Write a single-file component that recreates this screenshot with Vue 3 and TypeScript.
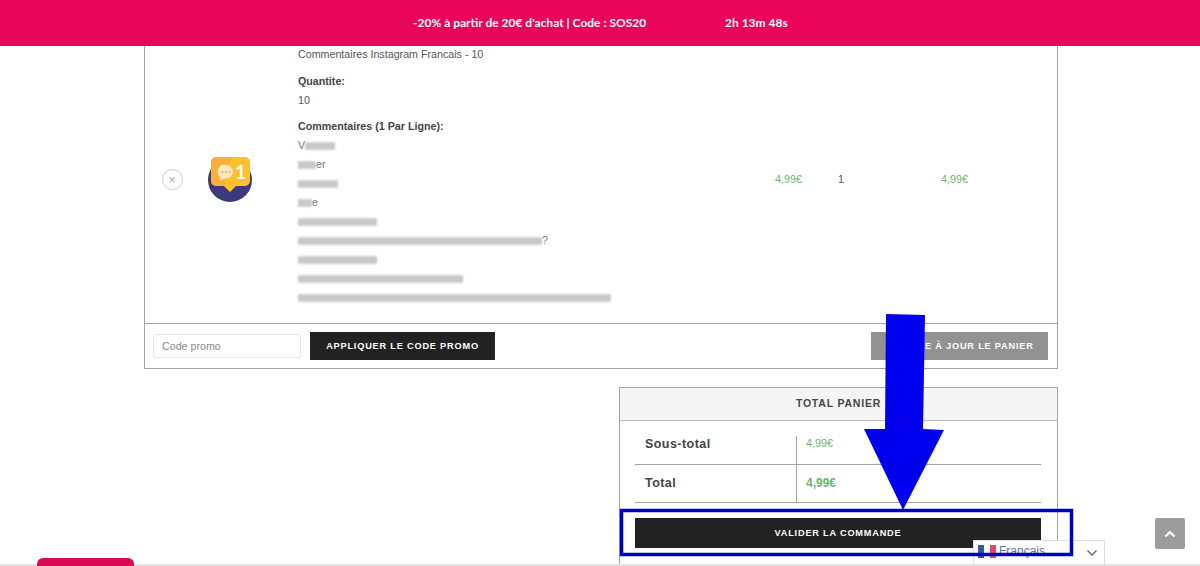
<script setup lang="ts">
interface NameLine { before: string; width: number; after: string }
const names: NameLine[] = [
  { before: 'V', width: 30, after: '' },
  { before: '', width: 18, after: 'er' },
  { before: '', width: 40, after: '' },
  { before: '', width: 14, after: 'e' },
  { before: '', width: 79, after: '' },
  { before: '', width: 244, after: '?' },
  { before: '', width: 79, after: '' },
  { before: '', width: 165, after: '' },
  { before: '', width: 313, after: '' },
]
</script>

<template>
  <div class="page">
    <header class="promo">
      <span class="promo-text">-20% à partir de 20€ d'achat | Code : SOS20</span>
      <span class="promo-timer">2h 13m 48s</span>
    </header>

    <main class="content">
      <section class="cart">
        <div class="cart-row">
          <div class="remove-cell">
            <span class="remove">×</span>
          </div>
          <div class="thumb-cell">
            <svg width="46" height="48" viewBox="0 0 46 48" aria-hidden="true">
              <circle cx="23" cy="25" r="22" fill="#3b3a7c" />
              <path d="M9 2h29a5 5 0 0 1 5 5v19a5 5 0 0 1-5 5h-9l-6 6-6-6H9a5 5 0 0 1-5-5V7a5 5 0 0 1 5-5z" fill="#fdc02f" />
              <path d="M9 2h17C20 10 17 21 18 32l-1-1H9a5 5 0 0 1-5-5V7a5 5 0 0 1 5-5z" fill="#fbb03b" />
              <path d="M19 10a7 6.800 0 0 1 0 13.600h-2l-4 3 .6-4.400A6.800 6.800 0 0 1 19 10z" fill="#ffe9c4" />
              <circle cx="15.500" cy="17" r="1" fill="#f5a623" />
              <circle cx="19" cy="17" r="1" fill="#f5a623" />
              <circle cx="22.500" cy="17" r="1" fill="#f5a623" />
              <text x="33.500" y="24" class="thumb-num">1</text>
            </svg>
          </div>
          <div class="details">
            <p class="line product">Commentaires Instagram Francais - 10</p>
            <p class="line label">Quantite:</p>
            <p class="line">10</p>
            <p class="line label label-second">Commentaires (1 Par Ligne):</p>
            <p v-for="(n, i) in names" :key="i" class="line name">
              <span v-if="n.before">{{ n.before }}</span><span class="smear" :style="{ width: n.width + 'px' }"></span><span v-if="n.after">{{ n.after }}</span>
            </p>
          </div>
          <div class="price">4,99€</div>
          <div class="qty">1</div>
          <div class="price">4,99€</div>
        </div>
        <div class="coupon-row">
          <div class="coupon">
            <input class="coupon-input" type="text" placeholder="Code promo" />
            <button class="btn btn-dark" type="button">APPLIQUER LE CODE PROMO</button>
          </div>
          <button class="btn btn-grey" type="button">METTRE À JOUR LE PANIER</button>
        </div>
      </section>

      <section class="totals">
        <h2 class="totals-title">TOTAL PANIER</h2>
        <div class="totals-body">
          <div class="totals-row first">
            <div class="totals-label">Sous-total</div>
            <div class="totals-value">4,99€</div>
          </div>
          <div class="totals-row">
            <div class="totals-label">Total</div>
            <div class="totals-value strong">4,99€</div>
          </div>
          <button class="btn checkout" type="button">VALIDER LA COMMANDE</button>
        </div>
      </section>
    </main>

    <div class="lang">
      <span class="flag"><i class="fb"></i><i class="fw"></i><i class="fr"></i></span>
      <span class="lang-name">Français</span>
      <svg class="lang-chev" width="12" height="8" viewBox="0 0 12 8" aria-hidden="true">
        <path d="M1.500 1.500 6 6l4.500-4.500" fill="none" stroke="#666" stroke-width="1.300" />
      </svg>
    </div>

    <svg class="annotation" width="1200" height="566" viewBox="0 0 1200 566" aria-hidden="true">
      <polygon points="886,314 925,315 923,429 944,430 903,510 864,429 885,429" fill="#0000ee" />
      <rect x="621.500" y="510.500" width="450" height="44" fill="none" stroke="#0000c4" stroke-width="3.500" />
    </svg>

    <a class="top-btn" aria-label="Haut de page">
      <svg width="12" height="8" viewBox="0 0 12 8" aria-hidden="true">
        <path d="M1.500 6.500 6 2l4.500 4.500" fill="none" stroke="#fff" stroke-width="2.200" />
      </svg>
    </a>

    <div class="pink-tab"></div>
    <div class="bottom-line"></div>
  </div>
</template>

<style>
html, body {
  margin: 0;
  height: 100%;
  overflow: hidden;
  background: #fff;
}
</style>

<style scoped>
.page {
  position: relative;
  height: 566px;
  overflow: hidden;
  font-family: "Liberation Sans", Arial, sans-serif;
  color: #444;
  background: #fff;
}
.promo {
  position: absolute;
  top: 0;
  left: 0;
  right: 0;
  height: 46px;
  z-index: 3;
  display: flex;
  align-items: center;
  padding: 0 0 1px 413px;
  box-sizing: border-box;
  background: #e8055a;
  color: #fff;
  font-family: Lato, sans-serif;
  font-size: 12px;
  font-weight: 700;
}
.promo-text {
  width: 312px;
}
.content {
  padding: 35px 142px 0 144px;
  display: flex;
  flex-direction: column;
}
.cart {
  border: 1px solid #a3a3a3;
  border-top: none;
}
.cart-row {
  display: grid;
  grid-template-columns: 54px 62px 514px 63px 103px 1fr;
  height: 288px;
  align-items: center;
  font-size: 10.800px;
}
.remove-cell {
  display: flex;
  justify-content: center;
}
.remove {
  width: 19px;
  height: 19px;
  border: 1px solid #ccc;
  border-radius: 50%;
  display: flex;
  align-items: center;
  justify-content: center;
  font-size: 13px;
  line-height: 1;
  color: #aaa;
}
.thumb-cell {
  display: flex;
  justify-content: center;
}
.thumb-num {
  font: 700 19px Lato, sans-serif;
  fill: #fff;
  text-anchor: middle;
}
.details {
  align-self: start;
  padding: 10px 0 0 37px;
  font-size: 10.700px;
  color: #555;
}
.line {
  margin: 0;
  height: 19px;
  line-height: 19px;
  white-space: nowrap;
}
.product {
  margin-bottom: 8px;
}
.label {
  font-weight: 700;
  color: #444;
}
.label-second {
  margin-top: 7px;
}
.name {
  display: flex;
  align-items: center;
  color: #777;
}
.smear {
  display: inline-block;
  height: 8px;
  background: repeating-linear-gradient(180deg, #d2d2d2 0 2px, #b4b4b4 2px 3px);
  filter: blur(1.200px);
}
.price {
  color: #6cb56c;
  font-size: 10.800px;
}
.qty {
  color: #555;
  font-size: 10.800px;
}
.coupon-row {
  border-top: 1px solid #a3a3a3;
  height: 44px;
  padding: 0 9px 0 8px;
  display: flex;
  align-items: center;
  justify-content: space-between;
}
.coupon {
  display: flex;
  align-items: center;
  gap: 9px;
}
.coupon-input {
  width: 148px;
  height: 24px;
  box-sizing: border-box;
  border: 1px solid #e8e8e8;
  border-radius: 2px;
  padding: 0 8px;
  font: 10.700px "Liberation Sans", Arial, sans-serif;
  color: #555;
  outline: none;
}
.coupon-input::placeholder {
  color: #8a8a8a;
  opacity: 1;
}
.btn {
  border: none;
  height: 28px;
  padding: 0;
  font: 700 9.200px "Liberation Sans", Arial, sans-serif;
  letter-spacing: 0.800px;
  color: #fff;
  text-align: center;
}
.btn-dark {
  width: 185px;
  background: #222;
}
.btn-grey {
  width: 177px;
  padding-left: 4px;
  background: #929292;
}
.totals {
  width: 439px;
  margin: 18px 0 0 auto;
  border: 1px solid #a3a3a3;
  box-sizing: border-box;
}
.totals-title {
  margin: 0;
  height: 32px;
  line-height: 31px;
  text-align: center;
  background: #f5f5f5;
  border-bottom: 1px solid #bdbdbd;
  font-size: 10.500px;
  font-weight: 700;
  letter-spacing: 0.800px;
  color: #444;
}
.totals-body {
  padding: 0 16px 16px 15px;
}
.totals-row {
  display: grid;
  grid-template-columns: 161px 1fr;
  height: 37px;
  border-bottom: 1px solid #a3a3a3;
  align-items: center;
}
.totals-row.first {
  height: 43px;
}
.totals-label {
  padding: 0 0 1px 10px;
  font-size: 12.500px;
  font-weight: 700;
  letter-spacing: 0.450px;
  color: #444;
}
.first .totals-label {
  padding: 2px 0 0 10px;
}
.totals-value {
  height: 100%;
  display: flex;
  align-items: center;
  padding-left: 9px;
  border-left: 1px solid #a3a3a3;
  font-size: 10.800px;
  color: #6cb56c;
}
.first .totals-value {
  box-sizing: border-box;
  height: 28px;
  align-self: end;
  align-items: flex-start;
  padding-top: 1px;
}
.totals-value.strong {
  font-size: 12px;
  font-weight: 700;
  padding-bottom: 1px;
  box-sizing: border-box;
}
.checkout {
  display: block;
  width: 100%;
  height: 30px;
  margin-top: 15px;
  background: #222;
}
.annotation {
  position: absolute;
  top: 0;
  left: 0;
  z-index: 2;
  pointer-events: none;
}
.lang {
  position: absolute;
  left: 973px;
  top: 540px;
  width: 132px;
  height: 27px;
  box-sizing: border-box;
  border: 1px solid #ddd;
  background: #fff;
  z-index: 1;
  font-size: 12px;
  color: #66739a;
}
.flag {
  position: absolute;
  left: 4px;
  top: 4px;
  display: flex;
}
.flag i {
  display: block;
  width: 6px;
  height: 13px;
}
.fb { background: #3557ad; }
.fw { background: #fff; }
.fr { background: #e9475f; }
.lang-name {
  position: absolute;
  left: 25px;
  top: 3px;
}
.lang-chev {
  position: absolute;
  left: 112px;
  top: 8px;
}
.top-btn {
  position: absolute;
  left: 1155px;
  top: 518px;
  width: 30px;
  height: 31px;
  border-radius: 2px;
  background: #9c9c9c;
  display: flex;
  align-items: center;
  justify-content: center;
  z-index: 2;
}
.pink-tab {
  position: absolute;
  left: 37px;
  bottom: 0;
  width: 97px;
  height: 8px;
  border-radius: 6px 6px 0 0;
  background: #d90a52;
  z-index: 2;
}
.bottom-line {
  position: absolute;
  left: 0;
  right: 0;
  bottom: 0;
  height: 2px;
  background: #e2e2e2;
  z-index: 1;
}
</style>
